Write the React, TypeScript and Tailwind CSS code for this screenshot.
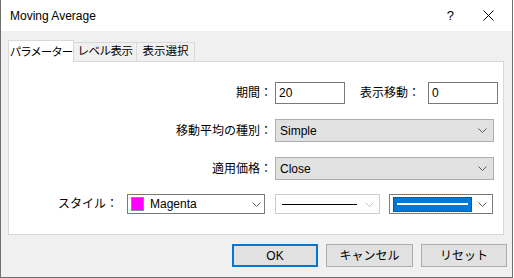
import React from "react";

const font = { fontFamily: '"Liberation Sans", "Noto Sans CJK JP", sans-serif' };

function Chevron({ light = false }: { light?: boolean }) {
  return (
    <svg width="9" height="5" viewBox="0 0 9 5" className="shrink-0">
      <polyline
        points="0.5,0.5 4.5,4.5 8.5,0.5"
        fill="none"
        stroke={light ? "#c4c4c4" : "#5a5a5a"}
        strokeWidth="1"
      />
    </svg>
  );
}

function Label({ children, className = "" }: { children: React.ReactNode; className?: string }) {
  return <div className={`text-[12px] text-black whitespace-nowrap ${className}`}>{children}</div>;
}

function Select({ value }: { value: string }) {
  return (
    <div className="flex h-[23px] w-[219px] items-center justify-between border border-[#adadad] bg-[#e1e1e1] pl-[4px] pr-[6px] text-[12px] text-black">
      <span>{value}</span>
      <Chevron />
    </div>
  );
}

function Button({ children, primary = false, className = "" }: { children: React.ReactNode; primary?: boolean; className?: string }) {
  return (
    <div
      className={`flex h-[23px] items-center justify-center bg-[#e1e1e1] text-[12px] text-black ${
        primary ? "border-2 border-[#0078d7]" : "border border-[#adadad]"
      } ${className}`}
    >
      {children}
    </div>
  );
}

export default function App() {
  return (
    <div className="h-[278px] w-[514px] bg-white" style={font}>
      <div className="flex h-[278px] w-[513px] flex-col border-x border-b border-[#707070]">
        {/* title bar */}
        <div className="flex h-[31px] shrink-0 items-center bg-white">
          <span className="ml-[9px] text-[12px] text-black">Moving Average</span>
          <span className="ml-auto mr-[29px] text-[13px] text-black">?</span>
          <svg width="11" height="11" viewBox="0 0 11 11" className="mr-[18px]">
            <path d="M0.5 0.5 L10.5 10.5 M10.5 0.5 L0.5 10.5" stroke="#000" strokeWidth="1" />
          </svg>
        </div>

        {/* body */}
        <div className="flex flex-1 flex-col bg-[#f0f0f0] pl-[7px]">
          {/* tabs */}
          <div className="mt-[9px] flex h-[21px] items-end">
            <div className="relative z-10 -mb-px flex h-[22px] w-[66px] items-start justify-center whitespace-nowrap border-x border-t border-[#d9d9d9] bg-white pt-[3px] text-[11.5px] tracking-[-1px] text-black">
              パラメーター
            </div>
            <div className="flex h-[19px] w-[63px] items-center justify-center whitespace-nowrap border-t border-r border-[#d9d9d9] text-[11.5px] tracking-[-0.5px] text-black">
              レベル表示
            </div>
            <div className="flex h-[19px] w-[58px] items-center justify-center whitespace-nowrap border-t border-r border-[#d9d9d9] text-[11.5px] text-black">
              表示選択
            </div>
          </div>

          {/* panel */}
          <div className="flex h-[174px] w-[496px] flex-col border border-[#d9d9d9] bg-white pt-[20px]">
            <div className="flex h-[22px] items-center">
              <Label className="w-[263px] text-right">期間：</Label>
              <div className="ml-[3px] flex h-[22px] w-[70px] items-center border border-[#7a7a7a] pl-[3px] text-[12px]">20</div>
              <Label className="ml-[15px]">表示移動：</Label>
              <div className="ml-[8px] flex h-[22px] w-[70px] items-center border border-[#7a7a7a] pl-[3px] text-[12px]">0</div>
            </div>

            <div className="mt-[15px] flex items-center">
              <Label className="w-[263px] text-right">移動平均の種別：</Label>
              <div className="ml-[3px]">
                <Select value="Simple" />
              </div>
            </div>

            <div className="mt-[15px] flex items-center">
              <Label className="w-[263px] text-right">適用価格：</Label>
              <div className="ml-[3px]">
                <Select value="Close" />
              </div>
            </div>

            <div className="mt-[14px] flex items-center">
              <Label className="w-[109px] text-right">スタイル：</Label>
              <div className="ml-[9px] flex h-[20px] w-[138px] items-center border border-[#7a7a7a] bg-white pl-[3px] pr-[3px] text-[12px]">
                <div className="h-[14px] w-[13px] border border-[#8a8a8a] bg-[#ff00ff]" />
                <span className="ml-[6px]">Magenta</span>
                <div className="ml-auto">
                  <Chevron />
                </div>
              </div>
              <div className="ml-[10px] flex h-[20px] w-[105px] items-center border border-[#cccccc] bg-white pl-[6px] pr-[5px]">
                <div className="h-px w-[75px] bg-black" />
                <div className="ml-auto">
                  <Chevron light />
                </div>
              </div>
              <div className="ml-[9px] flex h-[20px] w-[104px] items-center border border-[#7a7a7a] bg-white pl-[3px] pr-[5px]">
                <div className="flex h-[15px] w-[79px] items-center justify-center border border-dotted border-[#333] bg-[#0078d7]">
                  <div className="h-[2px] w-[71px] bg-white" />
                </div>
                <div className="ml-auto">
                  <Chevron />
                </div>
              </div>
            </div>
          </div>

          {/* buttons */}
          <div className="mt-[9px] flex">
            <Button primary className="ml-[224px] w-[86px]">OK</Button>
            <Button className="ml-[8px] w-[87px]">キャンセル</Button>
            <Button className="ml-[8px] w-[86px]">リセット</Button>
          </div>
        </div>
      </div>
    </div>
  );
}
